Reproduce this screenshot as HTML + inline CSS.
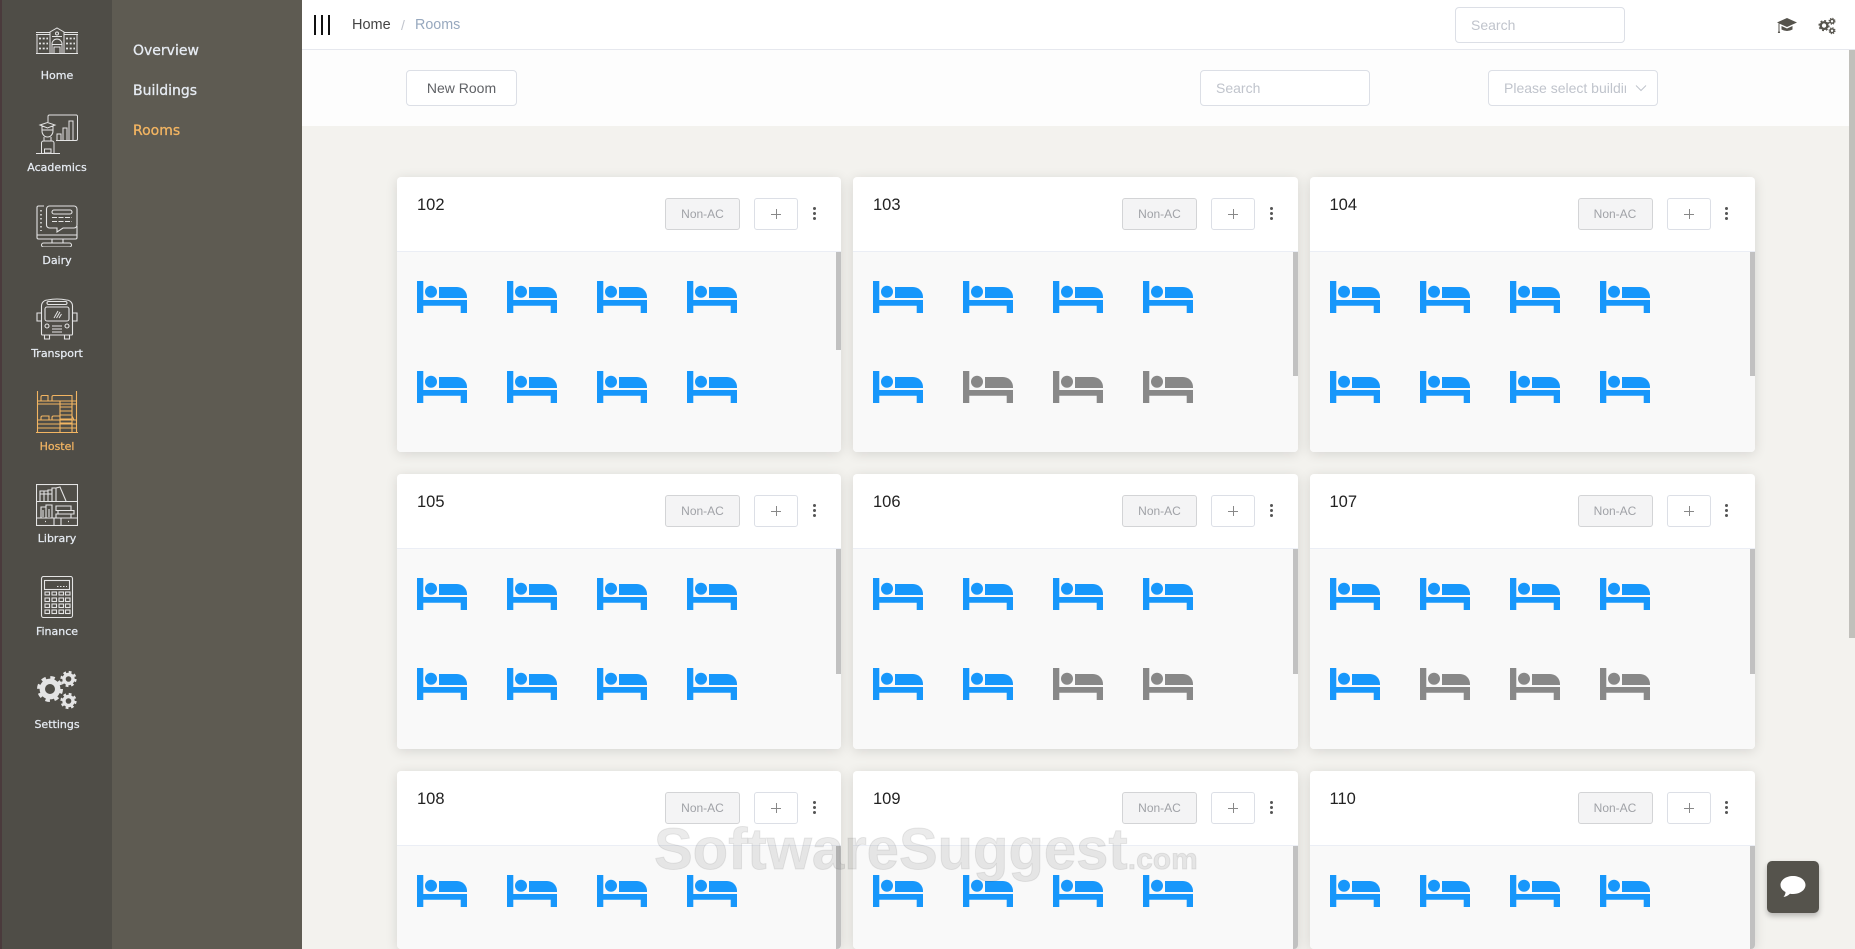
<!DOCTYPE html>
<html><head><meta charset="utf-8"><title>Rooms</title>
<style>
*{box-sizing:border-box}
html,body{margin:0;padding:0;width:1855px;height:949px;overflow:hidden;background:#f3f2ee;font-family:"Liberation Sans",sans-serif}
#page{position:relative;width:1855px;height:949px;overflow:hidden}
.abs{position:absolute}
#rail{left:0;top:0;width:112px;height:949px;background:#4f4d47;border-left:2px solid #4a3a3c}
#sub{left:112px;top:0;width:190px;height:949px;background:#5e5b52}
.nl{position:absolute;left:0;width:114px;text-align:center;font:11px/16px "DejaVu Sans",sans-serif;color:#e6ebf2;-webkit-text-stroke:.25px currentColor}
.ic{position:absolute;left:36px;width:42px;height:42px;fill:none;stroke:#e4e4e4;stroke-width:1}
.hi{stroke:#f3b562;color:#f3b562}
.sl{position:absolute;left:133px;font:14px/20px "DejaVu Sans",sans-serif;color:#e6ebf2;-webkit-text-stroke:.3px currentColor}
#top{left:302px;top:0;width:1553px;height:50px;background:#fff;border-bottom:1px solid #e6e8ee}
#bar{left:302px;top:50px;width:1553px;height:76px;background:#fdfdfd}
.inp{position:absolute;height:36px;background:#fff;border:1px solid #dcdfe6;border-radius:4px;font-size:14px;line-height:34px;color:#c0c4cc;padding-left:15px}
.card{position:absolute;width:445px;height:275px;background:#fff;border-radius:4px;box-shadow:0 2px 12px rgba(0,0,0,.12);overflow:hidden}
.w4{width:444px}
.t{position:absolute;left:20px;top:19px;font-size:16.5px;line-height:18px;color:#222}
.tag{position:absolute;left:268px;top:21px;width:75px;height:32px;background:#f4f4f5;border:1px solid #d3d4d6;border-radius:3px;font-size:12px;line-height:30px;text-align:center;color:#a0a2a7}
.pl{position:absolute;left:357px;top:21px;width:44px;height:32px;background:#fff;border:1px solid #dcdfe6;border-radius:3px}
.pl:before{content:"";position:absolute;left:16px;top:15px;width:10px;height:1px;background:#888}
.pl:after{content:"";position:absolute;left:21px;top:10px;width:1px;height:10px;background:#888}
.d{position:absolute;left:415.5px;width:3px;height:3px;border-radius:50%;background:#555}
.m .tag{left:269px}.m .pl{left:358px}.m .d{left:417px}
.bd{position:absolute;left:0;top:74px;width:100%;height:201px;background:#f9f9f9;border-top:1px solid #ebeef5}
.sb{position:absolute;right:0;top:0;width:5px;background:#c1c1c1}
.b{position:absolute;width:50px;height:32px;fill:#1797fb}
.g{fill:#888}
.c1{left:20px}.c2{left:110px}.c3{left:200px}.c4{left:290px}
.r1{top:29px}.r2{top:119px}
.last{height:178px}
.last .bd{height:104px}
</style></head>
<body><div id="page">
<svg width="0" height="0" style="position:absolute"><defs>
<symbol id="bed" viewBox="0 0 50 32"><path d="M0 0h6.300v19H50v13h-6.300v-7.300H6.300V32H0z"/><circle cx="14" cy="10.700" r="6"/><path d="M22 6h18a10 10 0 0 1 10 10v1H22z"/></symbol>
</defs></svg>

<div id="rail" class="abs"></div>
<div id="sub" class="abs"></div>

<!-- Home -->
<svg class="ic" style="top:20px" viewBox="0 0 42 42"><path d="M0 33.500H42M1 33V15M41 33V15M0 12.500H14M0 14.500H14M28 12.500H42M28 14.500H42M14 33V12L21 8L28 12V33M16 33V24a5 5 0 0 1 10 0V33M16 24.500H26M18 33V27H24V33M16 16.500H26"/><circle cx="21" cy="13.500" r="1.500"/><path stroke-dasharray="2 1.700" stroke-width="1.800" d="M3 18.500H12M3 23.500H12M3 28.500H12M30 18.500H39M30 23.500H39M30 28.500H39"/></svg>
<div class="nl" style="top:68px">Home</div>

<!-- Academics -->
<svg class="ic" style="top:113px" viewBox="0 0 42 42"><path d="M12 9V3.500a1.500 1.500 0 0 1 1.500-1.500H40.500a1.500 1.500 0 0 1 1 1.500V26a1.500 1.500 0 0 1-1.500 1.500H20"/><path d="M21 27V21H25V27M27 27V15H31V27M33 27V8H37V27"/><path d="M4 12L11.500 9.500L19 12L11.500 15ZM6 13V18a5.500 6 0 0 0 11 0V13M6 17H17M8 24V28M15 24V28M5.500 40V30a2 2 0 0 1 2-2H16a2 2 0 0 1 2 2V40M0 40.500H24M8.500 36H15V40H8.500Z"/></svg>
<div class="nl" style="top:160px">Academics</div>

<!-- Dairy -->
<svg class="ic" style="top:205px;stroke-width:1.100" viewBox="0 0 42 42"><path d="M8 1H2.500A1.500 1.500 0 0 0 1 2.500V30M41 21V30M1 30H41V32.500a1.500 1.500 0 0 1-1.500 1.500H2.500A1.500 1.500 0 0 1 1 32.500ZM16 34V38M27 34V38M7.500 38H33.500a2 2 0 0 1 0 4H7.500a2 2 0 0 1 0-4Z"/><path d="M13.500 1H38a3 3 0 0 1 3 3V20a3 3 0 0 1-3 3H27L21 27V23H13.500a3 3 0 0 1-3-3V4a3 3 0 0 1 3-3Z"/><rect x="16" y="5" width="20" height="4" rx="2"/><path d="M16 12.500H36M16 16.500H36" stroke-dasharray="5 1.500"/><path d="M5 5V26" stroke-dasharray="1.500 2.500" stroke-width="1.500"/></svg>
<div class="nl" style="top:253px">Dairy</div>

<!-- Transport -->
<svg class="ic" style="top:298px;stroke-width:1.100" viewBox="0 0 42 42"><path d="M5.500 8a6 6 0 0 1 6-6Q21 0 30.500 2a6 6 0 0 1 6 6V36a1 1 0 0 1-1 1H6.500a1 1 0 0 1-1-1ZM5 15H1V23H5M37 15H41V23H37M8.500 37V41H13.500V37M28.500 37V41H33.500V37"/><rect x="11" y="3.500" width="20" height="3" rx="1.500"/><rect x="9" y="9" width="24" height="14" rx="2"/><path d="M18 20L22 13M20.500 20L24 14M23 20L25.500 16" stroke-width="1"/><circle cx="11" cy="28" r="2"/><circle cx="31" cy="28" r="2"/><path d="M16 28H26M16 31H26M16 34H26"/></svg>
<div class="nl" style="top:346px">Transport</div>

<!-- Hostel -->
<svg class="ic hi" style="top:391px;stroke-width:1.100" viewBox="0 0 42 42"><path d="M1.500 0V41M40.500 0V41M0 41.500H42M2 10H40M2 13H40M2 29H40M2 33H40M2 37H40M24 10V41M36 10V41M24 16H36M24 20H36M24 24H36M24 28H36M24 32H36"/><path d="M5 10V6a1.500 1.500 0 0 1 1.500-1.500H12V10M16 9.500V6a1.500 1.500 0 0 1 1.500-1.500H36V9.500M5 29V26.500a1.500 1.500 0 0 1 1.500-1.500H13V29M16 29V26.500A1.500 1.500 0 0 1 17.500 25H24M36 25L38 29"/></svg>
<div class="nl" style="top:439px;color:#f3b562">Hostel</div>

<!-- Library -->
<svg class="ic" style="top:484px;stroke-width:1.100" viewBox="0 0 42 42"><rect x=".5" y=".5" width="41" height="41"/><path d="M1 17.500H41M1 34H41M18 34V41.500M25 34V41.500"/><path d="M4 17V7H8V17M8 17V7H12V17M12 17V6H16V17M16 17V4H20V17M20 4L24 3L30 17M4 10H16"/><path d="M5 34V23H10V34M10 34V21H16V34M7 26V33M13 25V33M20 22H35V26.500H20ZM22 26.500H38V30H22ZM20 30H35V34H20Z"/><path d="M9 37.500H10M32 37.500H33" stroke-width="1.300"/></svg>
<div class="nl" style="top:531px">Library</div>

<!-- Finance -->
<svg class="ic" style="top:576px;stroke-width:1.100" viewBox="0 0 42 42"><rect x="5.500" y=".5" width="31" height="41" rx="2"/><rect x="8.500" y="4.500" width="25" height="9"/><path d="M21 10.500H31" stroke-dasharray="1.500 1.500" stroke-width="1"/><g><rect x="9" y="16" width="4.500" height="3"/><rect x="16" y="16" width="4.500" height="3"/><rect x="23" y="16" width="4.500" height="3"/><rect x="29.500" y="16" width="4.500" height="3"/><rect x="9" y="22" width="4.500" height="3.500"/><rect x="16" y="22" width="4.500" height="3.500"/><rect x="23" y="22" width="4.500" height="3.500"/><rect x="29.500" y="22" width="4.500" height="3.500"/><rect x="9" y="28" width="4.500" height="3.500"/><rect x="16" y="28" width="4.500" height="3.500"/><rect x="23" y="28" width="4.500" height="3.500"/><rect x="29.500" y="28" width="4.500" height="3.500"/><rect x="9" y="34" width="4.500" height="3.500"/><rect x="16" y="34" width="4.500" height="3.500"/><rect x="23" y="34" width="4.500" height="3.500"/><rect x="29.500" y="34" width="4.500" height="3.500"/></g></svg>
<div class="nl" style="top:624px">Finance</div>

<!-- Settings -->
<svg style="position:absolute;left:36px;top:670px" width="44" height="40" viewBox="0 0 44 40" fill="none" stroke="#e4e4e4"><g transform="translate(14 19)"><circle r="7.700" stroke-width="5.400"/><circle r="11.500" stroke-width="3" stroke-dasharray="4.500 4.530"/></g><g transform="translate(32.500 9)"><circle r="4.500" stroke-width="3.400"/><circle r="7" stroke-width="2.200" stroke-dasharray="2.800 2.700"/></g><g transform="translate(32.500 31)"><circle r="4.500" stroke-width="3.400"/><circle r="7" stroke-width="2.200" stroke-dasharray="2.800 2.700"/></g></svg>
<div class="nl" style="top:717px">Settings</div>

<div class="sl" style="top:41px">Overview</div>
<div class="sl" style="top:81px">Buildings</div>
<div class="sl" style="top:121px;color:#f3b562">Rooms</div>

<!-- Header -->
<div id="top" class="abs"></div>
<div class="abs" style="left:314px;top:15px;width:2px;height:20px;background:#111"></div>
<div class="abs" style="left:321px;top:15px;width:2px;height:20px;background:#111"></div>
<div class="abs" style="left:328px;top:15px;width:2px;height:20px;background:#111"></div>
<div class="abs" style="left:352px;top:16px;font-size:14.5px;line-height:18px;color:#444">Home</div>
<div class="abs" style="left:401px;top:16px;font-size:14px;line-height:18px;color:#c0c4cc">/</div>
<div class="abs" style="left:415px;top:16px;font-size:14.3px;line-height:18px;color:#97a8be">Rooms</div>
<div class="inp" style="left:1455px;top:7px;width:170px">Search</div>
<svg class="abs" style="left:1777px;top:17px" width="20" height="17" viewBox="0 0 20 17"><path fill="#55534c" d="M10 1L20 5.500L10 10L0 5.500ZM4.500 9L10 11.500L15.500 9V12.500Q10 15.500 4.500 12.500ZM1.500 6.500H2.500V14L3.200 16H.8L1.500 14Z"/></svg>
<svg class="abs" style="left:1818px;top:17px" width="19" height="18" viewBox="0 0 44 40" fill="none" stroke="#55534c"><g transform="translate(14 19)"><circle r="7.700" stroke-width="5.400"/><circle r="11.500" stroke-width="3" stroke-dasharray="4.500 4.530"/></g><g transform="translate(32.500 9)"><circle r="4.500" stroke-width="3.400"/><circle r="7" stroke-width="2.200" stroke-dasharray="2.800 2.700"/></g><g transform="translate(32.500 31)"><circle r="4.500" stroke-width="3.400"/><circle r="7" stroke-width="2.200" stroke-dasharray="2.800 2.700"/></g></svg>

<!-- Toolbar -->
<div id="bar" class="abs"></div>
<div class="inp" style="left:406px;top:70px;width:111px;padding:0;text-align:center;color:#606266">New Room</div>
<div class="inp" style="left:1200px;top:70px;width:170px">Search</div>
<div class="inp" style="left:1488px;top:70px;width:170px;overflow:hidden;white-space:nowrap"><span style="display:block;width:122px;overflow:hidden">Please select building</span></div>
<svg class="abs" style="left:1635px;top:84px" width="12" height="8" viewBox="0 0 12 8"><path d="M1 1.500L6 6.500L11 1.500" fill="none" stroke="#c0c4cc"/></svg>

<!-- Row 1 -->
<div class="card w4" style="left:397px;top:177px"><div class="t">102</div><div class="tag">Non-AC</div><div class="pl"></div><i class="d" style="top:30px"></i><i class="d" style="top:35px"></i><i class="d" style="top:40px"></i>
<div class="bd"><div class="sb" style="height:98px"></div>
<svg class="b c1 r1"><use href="#bed"/></svg><svg class="b c2 r1"><use href="#bed"/></svg><svg class="b c3 r1"><use href="#bed"/></svg><svg class="b c4 r1"><use href="#bed"/></svg>
<svg class="b c1 r2"><use href="#bed"/></svg><svg class="b c2 r2"><use href="#bed"/></svg><svg class="b c3 r2"><use href="#bed"/></svg><svg class="b c4 r2"><use href="#bed"/></svg></div></div>

<div class="card m" style="left:853px;top:177px"><div class="t">103</div><div class="tag">Non-AC</div><div class="pl"></div><i class="d" style="top:30px"></i><i class="d" style="top:35px"></i><i class="d" style="top:40px"></i>
<div class="bd"><div class="sb" style="height:124px"></div>
<svg class="b c1 r1"><use href="#bed"/></svg><svg class="b c2 r1"><use href="#bed"/></svg><svg class="b c3 r1"><use href="#bed"/></svg><svg class="b c4 r1"><use href="#bed"/></svg>
<svg class="b c1 r2"><use href="#bed"/></svg><svg class="b c2 r2 g"><use href="#bed"/></svg><svg class="b c3 r2 g"><use href="#bed"/></svg><svg class="b c4 r2 g"><use href="#bed"/></svg></div></div>

<div class="card" style="left:1309.5px;top:177px"><div class="t">104</div><div class="tag">Non-AC</div><div class="pl"></div><i class="d" style="top:30px"></i><i class="d" style="top:35px"></i><i class="d" style="top:40px"></i>
<div class="bd"><div class="sb" style="height:124px"></div>
<svg class="b c1 r1"><use href="#bed"/></svg><svg class="b c2 r1"><use href="#bed"/></svg><svg class="b c3 r1"><use href="#bed"/></svg><svg class="b c4 r1"><use href="#bed"/></svg>
<svg class="b c1 r2"><use href="#bed"/></svg><svg class="b c2 r2"><use href="#bed"/></svg><svg class="b c3 r2"><use href="#bed"/></svg><svg class="b c4 r2"><use href="#bed"/></svg></div></div>

<!-- Row 2 -->
<div class="card w4" style="left:397px;top:474px"><div class="t">105</div><div class="tag">Non-AC</div><div class="pl"></div><i class="d" style="top:30px"></i><i class="d" style="top:35px"></i><i class="d" style="top:40px"></i>
<div class="bd"><div class="sb" style="height:125px"></div>
<svg class="b c1 r1"><use href="#bed"/></svg><svg class="b c2 r1"><use href="#bed"/></svg><svg class="b c3 r1"><use href="#bed"/></svg><svg class="b c4 r1"><use href="#bed"/></svg>
<svg class="b c1 r2"><use href="#bed"/></svg><svg class="b c2 r2"><use href="#bed"/></svg><svg class="b c3 r2"><use href="#bed"/></svg><svg class="b c4 r2"><use href="#bed"/></svg></div></div>

<div class="card m" style="left:853px;top:474px"><div class="t">106</div><div class="tag">Non-AC</div><div class="pl"></div><i class="d" style="top:30px"></i><i class="d" style="top:35px"></i><i class="d" style="top:40px"></i>
<div class="bd"><div class="sb" style="height:125px"></div>
<svg class="b c1 r1"><use href="#bed"/></svg><svg class="b c2 r1"><use href="#bed"/></svg><svg class="b c3 r1"><use href="#bed"/></svg><svg class="b c4 r1"><use href="#bed"/></svg>
<svg class="b c1 r2"><use href="#bed"/></svg><svg class="b c2 r2"><use href="#bed"/></svg><svg class="b c3 r2 g"><use href="#bed"/></svg><svg class="b c4 r2 g"><use href="#bed"/></svg></div></div>

<div class="card" style="left:1309.5px;top:474px"><div class="t">107</div><div class="tag">Non-AC</div><div class="pl"></div><i class="d" style="top:30px"></i><i class="d" style="top:35px"></i><i class="d" style="top:40px"></i>
<div class="bd"><div class="sb" style="height:125px"></div>
<svg class="b c1 r1"><use href="#bed"/></svg><svg class="b c2 r1"><use href="#bed"/></svg><svg class="b c3 r1"><use href="#bed"/></svg><svg class="b c4 r1"><use href="#bed"/></svg>
<svg class="b c1 r2"><use href="#bed"/></svg><svg class="b c2 r2 g"><use href="#bed"/></svg><svg class="b c3 r2 g"><use href="#bed"/></svg><svg class="b c4 r2 g"><use href="#bed"/></svg></div></div>

<!-- Row 3 -->
<div class="card w4 last" style="left:397px;top:771px"><div class="t">108</div><div class="tag">Non-AC</div><div class="pl"></div><i class="d" style="top:30px"></i><i class="d" style="top:35px"></i><i class="d" style="top:40px"></i>
<div class="bd"><div class="sb" style="height:103px"></div>
<svg class="b c1 r1"><use href="#bed"/></svg><svg class="b c2 r1"><use href="#bed"/></svg><svg class="b c3 r1"><use href="#bed"/></svg><svg class="b c4 r1"><use href="#bed"/></svg></div></div>

<div class="card m last" style="left:853px;top:771px"><div class="t">109</div><div class="tag">Non-AC</div><div class="pl"></div><i class="d" style="top:30px"></i><i class="d" style="top:35px"></i><i class="d" style="top:40px"></i>
<div class="bd"><div class="sb" style="height:103px"></div>
<svg class="b c1 r1"><use href="#bed"/></svg><svg class="b c2 r1"><use href="#bed"/></svg><svg class="b c3 r1"><use href="#bed"/></svg><svg class="b c4 r1"><use href="#bed"/></svg></div></div>

<div class="card last" style="left:1309.5px;top:771px"><div class="t">110</div><div class="tag">Non-AC</div><div class="pl"></div><i class="d" style="top:30px"></i><i class="d" style="top:35px"></i><i class="d" style="top:40px"></i>
<div class="bd"><div class="sb" style="height:103px"></div>
<svg class="b c1 r1"><use href="#bed"/></svg><svg class="b c2 r1"><use href="#bed"/></svg><svg class="b c3 r1"><use href="#bed"/></svg><svg class="b c4 r1"><use href="#bed"/></svg></div></div>

<!-- Page scrollbar -->
<div class="abs" style="left:1849px;top:50px;width:6px;height:588px;background:#c1c0bb"></div>

<!-- Watermark -->
<div class="abs" style="left:654px;top:819px;white-space:nowrap;font-weight:bold;font-size:58px;line-height:62px;color:rgba(0,0,0,.08);-webkit-text-stroke:1px rgba(0,0,0,.08)">SoftwareSuggest<span style="font-size:30px">.com</span></div>

<!-- Chat -->
<div class="abs" style="left:1767px;top:861px;width:52px;height:52px;background:#55534c;border-radius:5px;box-shadow:0 3px 6px rgba(0,0,0,.25)"></div>
<svg class="abs" style="left:1780px;top:875px" width="26" height="24" viewBox="0 0 26 24"><path fill="#fff" d="M13 1C20 1 25.500 5 25.500 10S20 19 13 19Q11.500 19 10 18.700Q7 21.500 3.500 22Q5.500 19.500 5.500 17C2.500 15.500.5 13 .5 10C.5 5 6 1 13 1Z"/></svg>

</div></body></html>
